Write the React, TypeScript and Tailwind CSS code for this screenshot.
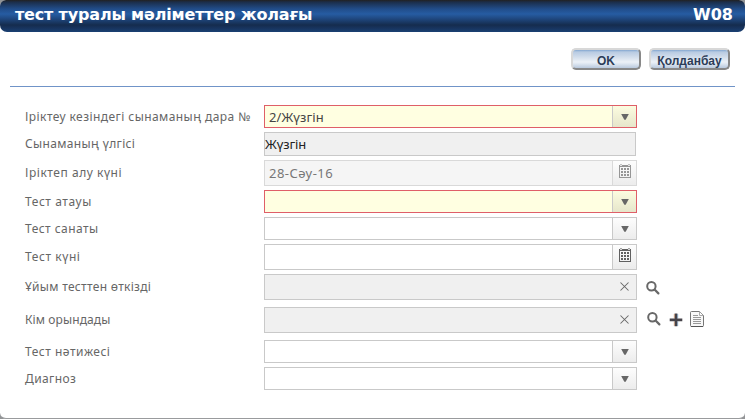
import React from "react";

const dropGradient = "bg-gradient-to-b from-[#fdfdfd] to-[#ececec]";

function Arrow() {
  return (
    <svg width="8" height="6" viewBox="0 0 8 6" className="block">
      <path d="M0.2 0H7.8L4.7 5.7H3.3Z" fill="#666" />
    </svg>
  );
}

function Calendar({ color }: { color: string }) {
  return (
    <svg width="12" height="14" viewBox="0 0 12 14" shapeRendering="crispEdges" fill={color} className="block">
      <path d="M0 1H12V14H0ZM1 3V13H11V3Z" fillRule="evenodd" />
      <path d="M1 0H3V1H1ZM9 0H11V1H9Z" opacity=".55" />
      <path d="M1 1H3V2H1ZM9 1H11V2H9Z" fill="#fff" opacity=".75" />
      {[4, 7, 10].map((y) =>
        [2, 5, 8].map((x) => <rect key={`${x}-${y}`} x={x} y={y} width="2" height="2" />),
      )}
    </svg>
  );
}

function Cross() {
  return (
    <svg width="9" height="9" viewBox="0 0 9 9" className="block">
      <path d="M0.5 0.5L8.5 8.5M8.5 0.5L0.5 8.5" stroke="#666" strokeWidth="1.05" />
    </svg>
  );
}

function Magnifier() {
  return (
    <svg width="14" height="14" viewBox="0 0 14 14" className="block" fill="none" stroke="#686868">
      <circle cx="5.4" cy="5.2" r="4.2" strokeWidth="2" />
      <path d="M8.8 8.8L12.4 12.4" strokeWidth="2.2" strokeLinecap="round" />
    </svg>
  );
}

function Plus() {
  return (
    <svg width="14" height="14" viewBox="0 0 14 14" className="block">
      <path d="M5.6 0.6H8.4V5.6H13.3V8.2H8.4V13.2H5.6V8.2H0.7V5.6H5.6Z" fill="#46434a" />
      <path d="M5.3 1V5.3M5.3 8.5V13" stroke="#cf8553" strokeWidth=".6" />
      <path d="M8.7 1V5.3M8.7 8.5V13" stroke="#5c91bb" strokeWidth=".6" />
    </svg>
  );
}

function Document() {
  return (
    <svg width="14" height="16" viewBox="0 0 14 16" className="block">
      <path d="M1.5 0.5H9.5L13.5 4.5V14.5Q13.5 15.5 12.5 15.5H1.5Q0.5 15.5 0.5 14.5V1.5Q0.5 0.5 1.5 0.5Z" fill="#f8f8f8" stroke="#777" />
      <path d="M9.5 0.8V4.5H13.2" fill="#fff" stroke="#aaa" />
      <path d="M3 4.5H8M3 6.5H11M3 8.5H11M3 10.5H11M3 12.5H11" stroke="#999" />
      <path d="M1 15.5H13" stroke="#555" />
    </svg>
  );
}

type Kind = "select" | "required" | "date" | "dateDisabled" | "lookup" | "text";

function Field({ kind, value }: { kind: Kind; value?: string }) {
  if (kind === "text") {
    return (
      <div className="flex h-6 w-[372px] items-center border border-[#c9c9c9] bg-[#f0f0f0] font-['Noto_Sans',sans-serif] text-[13px] leading-4 tracking-[-0.1px] text-[#222]">
        {value}
      </div>
    );
  }
  if (kind === "lookup") {
    return (
      <div className="flex h-[26px] w-[373px] justify-end border border-[#c9c9c9] bg-[#f0f0f0] pt-[7px] pr-[7px]">
        <Cross />
      </div>
    );
  }
  const tall = kind === "date" || kind === "dateDisabled";
  const required = kind === "required";
  const disabled = kind === "dateDisabled";
  const box = required
    ? "border-[#df5f68] bg-[#ffffe1]"
    : disabled
      ? "border-[#d9d9d9] bg-[#f5f5f5]"
      : "border-[#c9c9c9] bg-white";
  return (
    <div className={`flex w-[373px] border ${tall ? "h-[26px]" : "h-[23px]"} ${box}`}>
      <div className={`flex flex-1 items-center pl-1 font-['Noto_Sans',sans-serif] text-[13px] leading-4 ${disabled ? "tracking-[0.45px] text-[#777]" : "tracking-[0.1px] text-[#444]"}`}>
        {value}
      </div>
      <div
        className={`flex w-6 justify-center border-l ${disabled ? "border-[#d9d9d9]" : "border-[#c9c9c9]"} ${required ? "bg-gradient-to-b from-[#fcfce0] to-[#e6e6cb]" : dropGradient} ${tall ? "pt-[3px]" : "pt-[8px]"}`}
      >
        {tall ? <Calendar color={disabled ? "#969696" : "#606060"} /> : <Arrow />}
      </div>
    </div>
  );
}

interface Row {
  label: string;
  tracking: string;
  kind: Kind;
  value?: string;
  gap: string;
  tools?: React.ReactNode;
}

const rows: Row[] = [
  { label: "Іріктеу кезіндегі сынаманың дара №", tracking: "tracking-[0.43px]", kind: "required", value: "2/Жүзгін", gap: "mb-1" },
  { label: "Сынаманың үлгісі", tracking: "tracking-[0.35px]", kind: "text", value: "Жүзгін", gap: "mb-1" },
  { label: "Іріктеп алу күні", tracking: "tracking-[0.54px]", kind: "dateDisabled", value: "28-Сәу-16", gap: "mb-1" },
  { label: "Тест атауы", tracking: "tracking-[0.55px]", kind: "required", gap: "mb-1" },
  { label: "Тест санаты", tracking: "tracking-[0.45px]", kind: "select", gap: "mb-1" },
  { label: "Тест күні", tracking: "tracking-[0.57px]", kind: "date", gap: "mb-1" },
  {
    label: "Ұйым тесттен өткізді",
    tracking: "tracking-[0.3px]",
    kind: "lookup",
    gap: "mb-[7px]",
    tools: <div className="ml-[9px] pt-[1px]"><Magnifier /></div>,
  },
  {
    label: "Кім орындады",
    tracking: "tracking-[0.1px]",
    kind: "lookup",
    gap: "mb-[7px]",
    tools: (
      <div className="ml-[10px] flex items-center">
        <div className="pb-[2px]"><Magnifier /></div>
        <div className="ml-[8px]"><Plus /></div>
        <div className="ml-[7px] pb-[2px]"><Document /></div>
      </div>
    ),
  },
  { label: "Тест нәтижесі", tracking: "tracking-[0.5px]", kind: "select", gap: "mb-1" },
  { label: "Диагноз", tracking: "tracking-[0.4px]", kind: "select", gap: "" },
];

function Button({ label, width }: { label: string; width: string }) {
  return (
    <button
      className={`flex h-[22px] ${width} items-center justify-center rounded-[5px] border-2 border-t-[#d8d8d8] border-r-[#888] border-b-[#888] border-l-[#d8d8d8] bg-[linear-gradient(to_bottom,#83a6d0_0,#b8cbe2_2px,#ccd9e9_6px,#ecf1f7_12px,#dce5f0_14px,#b9c9de_100%)] pt-[3px] font-['Liberation_Sans',sans-serif] text-[12px] leading-4 font-bold whitespace-nowrap text-[#2c3c58]`}
    >
      {label}
    </button>
  );
}

export default function App() {
  return (
    <div className="h-[419px] w-[745px] bg-[#929496]">
      <div className="flex h-[419px] flex-col overflow-hidden rounded-[6px] border-b border-[#999b9d] bg-white">
        <header className="flex h-8 shrink-0 justify-between rounded-b-[7px] bg-[linear-gradient(to_bottom,#222_0,#1b2d49_2px,#214d8a_9px,#265ca2_14px,#204b85_18px,#152c4e_25px,#17335d_28px,#1a4073_32px)] pt-[5px] pr-3 pl-[15px] font-['DejaVu_Sans',sans-serif] text-[16px] leading-5 font-bold text-white">
          <span className="tracking-[-0.17px]">тест туралы мәліметтер жолағы</span>
          <span>W08</span>
        </header>
        <div className="mx-[10px] flex h-[55px] shrink-0 justify-end gap-2 border-b border-[#7094c8] pt-4 pr-[5px]">
          <Button label="OK" width="w-[70px]" />
          <Button label="Қолданбау" width="w-[81px]" />
        </div>
        <main className="flex flex-col pt-[18px] pl-[25px]">
          {rows.map((row) => (
            <div key={row.label} className={`flex items-center ${row.gap}`}>
              <div className={`w-[239px] font-['Noto_Sans',sans-serif] text-[12px] leading-4 whitespace-nowrap text-[#666] ${row.tracking}`}>
                {row.label}
              </div>
              <Field kind={row.kind} value={row.value} />
              {row.tools}
            </div>
          ))}
        </main>
      </div>
    </div>
  );
}
